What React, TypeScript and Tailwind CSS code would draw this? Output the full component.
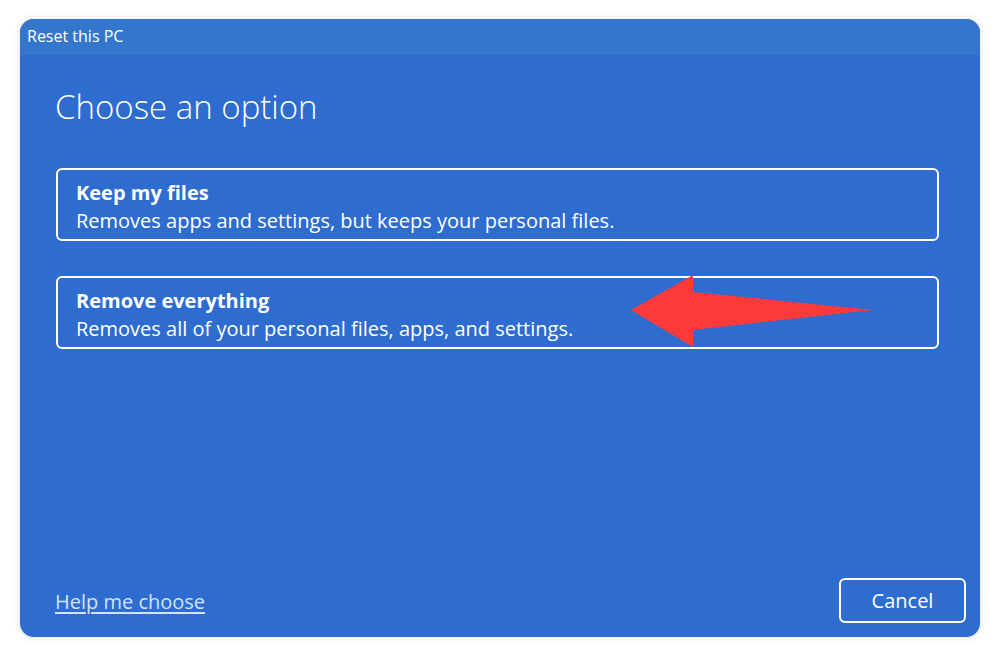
import React from 'react';

function OptionCard({ title, desc }: { title: string; desc: string }) {
  return (
    <div className="h-[73px] rounded-[6px] border-2 border-white px-[18px] pt-[9px] text-white">
      <div className="text-[20px] font-bold leading-[28px]">{title}</div>
      <div className="text-[20px] leading-[28px]">{desc}</div>
    </div>
  );
}

export default function App() {
  return (
    <div className="h-[657px] w-[1000px] bg-white pt-[19px] px-[20px]" style={{ fontFamily: '"Open Sans", "Noto Sans", sans-serif' }}>
      <div className="flex h-[618px] w-[960px] flex-col overflow-hidden rounded-[14px] bg-[#2e6ccf] shadow-[0_0_8px_rgba(0,0,0,0.12)]">
        {/* title bar */}
        <div className="h-[36px] bg-[#3476cc] px-[7px] pt-[6px] text-[16px] leading-[22px] text-white">Reset this PC</div>

        <div className="flex flex-1 flex-col pl-[35px] pr-[41px]">
          <h1 className="mt-[29px] text-[33px] font-light leading-[46px] text-white">Choose an option</h1>

          <div className="relative mt-[38px] flex flex-col gap-[35px] pl-[1px]">
            <OptionCard title="Keep my files" desc="Removes apps and settings, but keeps your personal files." />
            <div className="relative">
              <OptionCard title="Remove everything" desc="Removes all of your personal files, apps, and settings." />
              {/* annotation arrow */}
              <svg className="absolute left-[575px] top-[-1px]" width="245" height="75" viewBox="0 0 245 75">
                <polygon points="0,35 62,0 62,17 242,35 62,55 62,72" fill="#fc3a3a" />
              </svg>
            </div>
          </div>

          <div className="mt-auto mb-[14px] flex items-center justify-between">
            <a className="mt-[2px] text-[20px] leading-[28px] text-[#d2e2f7] underline underline-offset-[3px]" href="#">Help me choose</a>
            <button className="mr-[-27px] h-[45px] w-[127px] rounded-[6px] border-2 border-white text-[20px] text-white">Cancel</button>
          </div>
        </div>
      </div>
    </div>
  );
}
